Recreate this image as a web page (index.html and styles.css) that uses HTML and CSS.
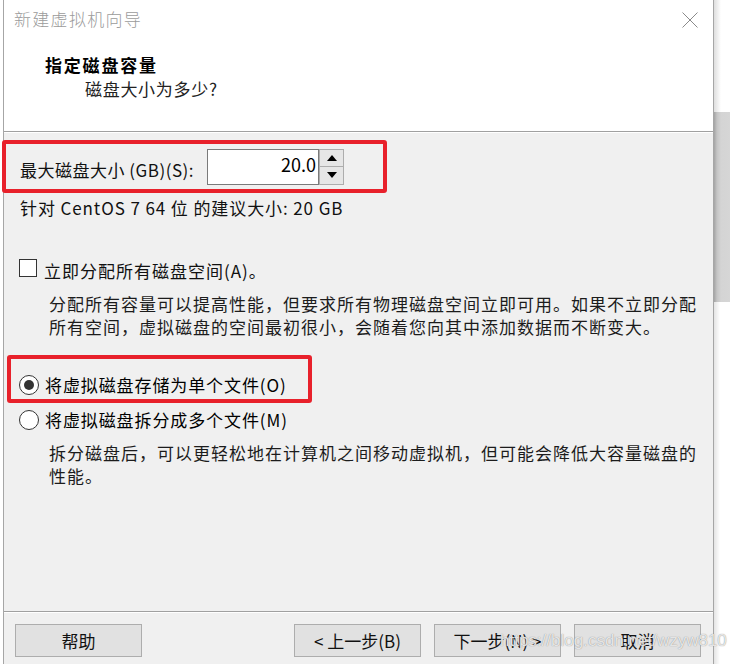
FILE: index.html
```html
<!DOCTYPE html>
<html lang="zh-CN">
<head>
    <meta charset="UTF-8">
    <title>新建虚拟机向导</title>
    <link rel="stylesheet" href="styles.css">
</head>
<body>
    <div class="page">
        <div class="gutter"></div>
        <div class="dialog">
            <div class="head">
                <div class="titlebar">
                    <span class="title">新建虚拟机向导</span>
                    <svg class="close" width="16" height="16" viewBox="0 0 16 16"><path d="M0.5 0.5L15.5 15.5M15.5 0.5L0.5 15.5" stroke="#8a8a8a" stroke-width="1" fill="none"/></svg>
                </div>
                <div class="heading">指定磁盘容量</div>
                <div class="subheading">磁盘大小为多少?</div>
            </div>

            <div class="body">
                <div class="mark size-row">
                    <span class="size-label">最大磁盘大小 (GB)(S):</span>
                    <div class="spin">
                        <div class="spin-input">20.0</div>
                        <div class="spin-btns">
                            <div class="spin-btn"><svg width="10" height="6" viewBox="0 0 10 6"><path d="M0 6L5 0L10 6Z" fill="#000"/></svg></div>
                            <div class="spin-btn"><svg width="10" height="6" viewBox="0 0 10 6"><path d="M0 0L10 0L5 6Z" fill="#000"/></svg></div>
                        </div>
                    </div>
                </div>
                <p class="hint">针对 CentOS 7 64 位 的建议大小: 20 GB</p>

                <div class="option check-row">
                    <span class="checkbox"></span>
                    <span class="check-label">立即分配所有磁盘空间(A)。</span>
                </div>
                <p class="desc">分配所有容量可以提高性能，但要求所有物理磁盘空间立即可用。如果不立即分配所有空间，虚拟磁盘的空间最初很小，会随着您向其中添加数据而不断变大。</p>

                <div class="mark radio-mark">
                    <div class="option">
                        <span class="radio on"></span>
                        <span class="radio-label">将虚拟磁盘存储为单个文件(O)</span>
                    </div>
                </div>
                <div class="option radio-row">
                    <span class="radio"></span>
                    <span class="radio-label">将虚拟磁盘拆分成多个文件(M)</span>
                </div>
                <p class="desc">拆分磁盘后，可以更轻松地在计算机之间移动虚拟机，但可能会降低大容量磁盘的性能。</p>
            </div>

            <div class="foot">
                <div class="btn btn-help">帮助</div>
                <div class="btn">&lt; 上一步(B)</div>
                <div class="btn">下一步(N) &gt;</div>
                <div class="btn">取消</div>
                <span class="watermark">https://blog.csdn.net/wzyw810</span>
            </div>
        </div>
        <div class="shade">
            <div class="shade-top"></div>
            <div class="shade-mid"></div>
            <div class="shade-bot"></div>
        </div>
    </div>
</body>
</html>
```

FILE: styles.css
```css
* {
    margin: 0;
    padding: 0;
    box-sizing: border-box;
}

body {
    width: 730px;
    height: 664px;
    overflow: hidden;
    background-color: #fff;
    font-family: "Noto Sans CJK SC", "Noto Sans", sans-serif;
    color: #000;
}

.page {
    display: flex;
    height: 664px;
}

.gutter {
    width: 3px;
}

.dialog {
    width: 711px;
    height: 664px;
    display: flex;
    flex-direction: column;
    border-left: 1px solid #a6a6a6;
    border-right: 1px solid #a6a6a6;
}

/* header */

.head {
    height: 132px;
    background-color: #fff;
    border-bottom: 1px solid #a0a0a0;
}

.titlebar {
    display: flex;
    justify-content: space-between;
    align-items: flex-start;
    padding: 8px 15px 0 10px;
}

.title {
    font-size: 17px;
    line-height: 22px;
    letter-spacing: 1.3px;
    color: #9b9b9b;
    font-weight: 300;
}

.close {
    margin-top: 4px;
}

.heading {
    margin-top: 24px;
    padding-left: 41px;
    font-size: 17px;
    line-height: 22px;
    letter-spacing: 1.8px;
    font-weight: 700;
}

.subheading {
    margin-top: 2px;
    padding-left: 81px;
    font-size: 17px;
    line-height: 22px;
    letter-spacing: 0.7px;
    color: #222;
}

/* body */

.body {
    flex: 1;
    background-color: #f0f0f0;
    border-top: 1px solid #fff;
}

.mark {
    border: 4px solid #e8212b;
    border-radius: 3px;
}

.size-row {
    margin: 7px 0 0 -2px;
    width: 385px;
    height: 53px;
    display: flex;
    align-items: center;
    padding-left: 14px;
}

.size-label {
    flex: 0 0 187px;
    padding-top: 7px;
    font-size: 17px;
    line-height: 22px;
    letter-spacing: 0.5px;
    color: #111;
}

.spin {
    display: flex;
    height: 36px;
}

.spin-input {
    width: 112px;
    background-color: #fff;
    border: 1px solid #7a7a7a;
    text-align: right;
    padding: 2px 2px 0 0;
    font-size: 18px;
    line-height: 24px;
}

.spin-btns {
    width: 25px;
    display: flex;
    flex-direction: column;
}

.spin-btn {
    flex: 1;
    display: flex;
    align-items: center;
    justify-content: center;
    background-color: #e6e6e6;
    border: 1px solid #adadad;
}

.spin-btn + .spin-btn {
    border-top: none;
}

.hint {
    margin: 4px 0 0 16px;
    font-size: 17px;
    line-height: 22px;
    letter-spacing: 0.9px;
    color: #111;
}

.option {
    display: flex;
    align-items: center;
    gap: 6px;
    font-size: 17px;
    line-height: 22px;
}

.check-row {
    margin-top: 41px;
    padding-left: 15px;
    align-items: flex-start;
    gap: 7px;
}

.checkbox {
    width: 18px;
    height: 18px;
    margin-top: -1px;
    background-color: #fff;
    border: 1px solid #333;
}

.check-label {
    letter-spacing: 1px;
    color: #111;
}

.desc {
    margin: 10px 0 0 45px;
    width: 662px;
    font-size: 17px;
    line-height: 23px;
    letter-spacing: 1px;
    color: #1c1c1c;
}

.radio-mark {
    margin: 17px 0 0 3px;
    width: 305px;
    height: 48px;
    padding: 15px 0 0 8px;
}

.radio-row {
    margin-top: 6px;
    padding-left: 15px;
}

.radio {
    width: 20px;
    height: 20px;
    border-radius: 50%;
    background-color: #fff;
    border: 1px solid #333;
    display: flex;
    align-items: center;
    justify-content: center;
}

.radio.on::after {
    content: "";
    width: 10px;
    height: 10px;
    border-radius: 50%;
    background-color: #333;
}

.radio-label {
    letter-spacing: 0.9px;
}

/* footer */

.foot {
    position: relative;
    height: 53px;
    display: flex;
    align-items: flex-start;
    gap: 13px;
    padding: 12px 12px 0 11px;
    background-color: #f0f0f0;
    border-top: 1px solid #a0a0a0;
    box-shadow: inset 0 1px #fff;
}

.btn {
    width: 127px;
    height: 33px;
    background-color: #e1e1e1;
    border: 1px solid #adadad;
    font-size: 17px;
    line-height: 31px;
    text-align: center;
    color: #111;
}

.btn-help {
    margin-right: auto;
}

.watermark {
    position: absolute;
    left: 496px;
    top: 18px;
    font-family: "Liberation Sans Narrow", "Liberation Sans", sans-serif;
    font-size: 17px;
    line-height: 22px;
    color: rgba(255, 255, 255, 0.8);
    text-shadow: 0 0 1px #777;
}

/* window shadow on the right */

.shade {
    width: 16px;
    display: flex;
    flex-direction: column;
}

.shade-top {
    height: 112px;
    background: linear-gradient(to right, #dedede, #fff 7px);
}

.shade-mid {
    height: 190px;
    background: linear-gradient(to right, #a4a4a4, #c4c4c4 3px, #d4d4d4 7px, #d6d6d6);
}

.shade-bot {
    flex: 1;
    background: linear-gradient(to right, #e4e4e4, #fff 6px);
}
```
